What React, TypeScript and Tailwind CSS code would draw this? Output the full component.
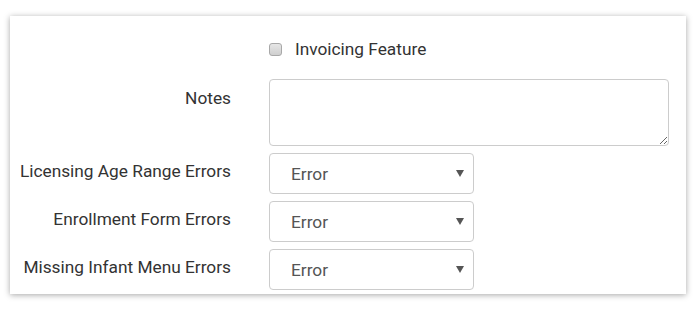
const rows = ['Licensing Age Range Errors', 'Enrollment Form Errors', 'Missing Infant Menu Errors'];

function Caret() {
  return (
    <svg width="8" height="7" viewBox="0 0 8 7" className="shrink-0">
      <path d="M0 0h8L4 7z" fill="#555" />
    </svg>
  );
}

export default function App() {
  return (
    <div className="w-[696px] h-[312px] bg-white pt-[16px] pl-[10px] font-['Roboto',sans-serif] text-[17.3px]">
      <div className="w-[676px] h-[278px] bg-white shadow-[0_1px_6px_rgba(0,0,0,0.35)] pt-[23px]">
        {/* checkbox row */}
        <div className="flex h-[20px] items-center pl-[259px]">
          <div className="w-[13px] h-[13px] rounded-[3px] border border-[#a8a8a8] bg-gradient-to-b from-[#e6e6e6] to-[#cfcfcf]" />
          <span className="ml-[13px] text-[#333] leading-[20px]">Invoicing Feature</span>
        </div>

        {/* notes */}
        <div className="flex mt-[20px]">
          <label className="w-[221px] text-right text-[#333] pt-[8px] leading-[23px]">Notes</label>
          <textarea className="ml-[38px] w-[400px] h-[67px] border border-[#ccc] rounded-[4px] outline-none px-3 py-1.5 block" />
        </div>

        {/* error selects */}
        <div className="flex flex-col gap-[7px] mt-[7px]">
          {rows.map((r) => (
            <div key={r} className="flex">
              <label className="w-[221px] text-right text-[#333] pt-[7px] leading-[23px]">{r}</label>
              <div className="ml-[38px] w-[205px] h-[41px] border border-[#ccc] rounded-[4px] flex items-center justify-between pl-[21px] pr-[9px]">
                <span className="text-[#555] pt-[2px]">Error</span>
                <Caret />
              </div>
            </div>
          ))}
        </div>
      </div>
    </div>
  );
}
